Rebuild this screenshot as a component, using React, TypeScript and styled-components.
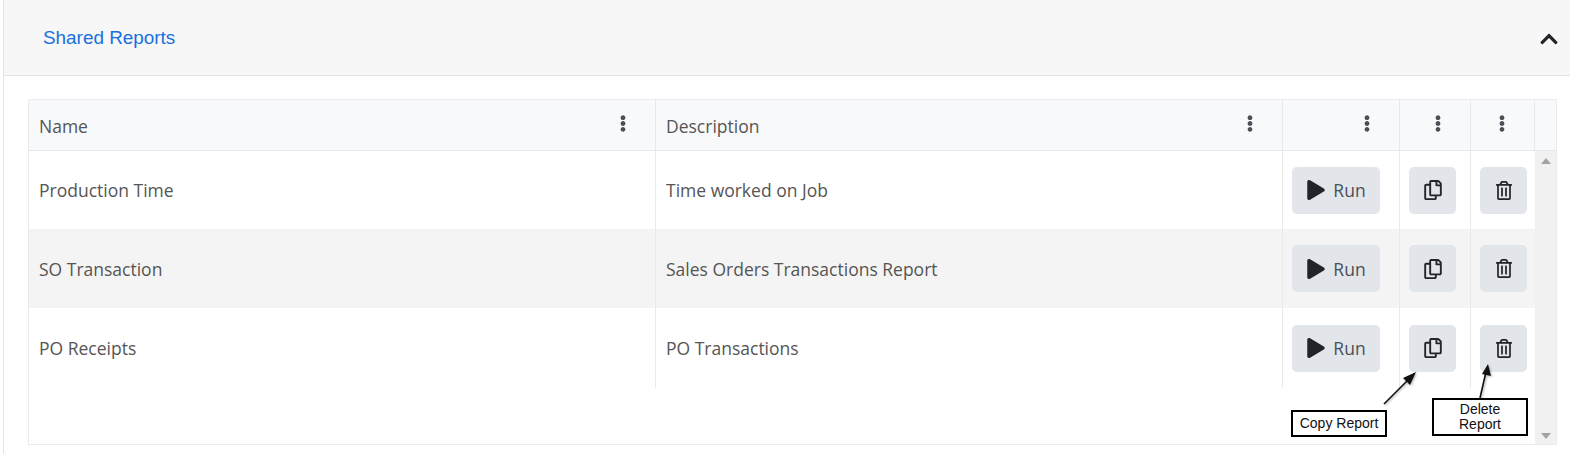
import React from 'react';
import styled, { createGlobalStyle } from 'styled-components';
import { FaChevronUp, FaEllipsisV, FaPlay, FaRegCopy, FaRegTrashAlt } from 'react-icons/fa';

const GlobalStyle = createGlobalStyle`
  html, body {
    margin: 0;
    padding: 0;
    background: #fff;
    overflow: hidden;
  }
  * {
    box-sizing: border-box;
  }
`;

const Page = styled.div`
  position: relative;
  width: 1570px;
  height: 454px;
  padding-left: 3px;
  font-family: 'Open Sans', sans-serif;
`;

const Panel = styled.div`
  height: 454px;
  border-left: 1px solid #e4e4e4;
`;

const PanelHeader = styled.div`
  display: flex;
  align-items: center;
  justify-content: space-between;
  height: 76px;
  padding: 0 11px 0 39px;
  background: #f7f7f7;
  border-bottom: 1px solid #e3e3e3;
`;

const PanelTitle = styled.span`
  font-family: 'Liberation Sans', sans-serif;
  font-size: 18.9px;
  color: #1a6fe0;
`;

const Chevron = styled(FaChevronUp)`
  width: 20px;
  height: 20px;
  color: #212529;
  margin-top: 2px;
`;

const PanelBody = styled.div`
  padding: 23px 0 0 24px;
`;

const Grid = styled.div`
  width: 1529px;
  height: 346px;
  border: 1px solid #ebebef;
  display: flex;
  flex-direction: column;
`;

const HeaderRow = styled.div`
  display: grid;
  grid-template-columns: 627px 627px 117px 71px 64px 21px;
  height: 51px;
  flex: none;
  background: #f8f9fa;
  border-bottom: 1px solid #e6e8eb;
`;

const HeaderCell = styled.div`
  display: flex;
  align-items: center;
  justify-content: space-between;
  padding: 2px 24px 0 10px;
  font-size: 17.5px;
  color: #555;
  border-right: 1px solid #e6e8eb;
  &:last-child {
    border-right: 0;
  }
`;

const MenuDots = styled(FaEllipsisV)`
  width: 16px;
  height: 17px;
  color: #495057;
  margin-left: auto;
  margin-top: -6px;
`;

const GridBody = styled.div`
  display: flex;
  flex: 1;
  min-height: 0;
`;

const Rows = styled.div`
  display: grid;
  grid-template-rows: 78px 79px 80px;
  align-content: start;
  width: 1506px;
`;

const Row = styled.div<{ $striped?: boolean }>`
  display: grid;
  grid-template-columns: 627px 627px 117px 71px 64px;
  background: ${({ $striped }) => ($striped ? '#f4f4f4' : '#fff')};
`;

const TextCell = styled.div`
  display: flex;
  align-items: center;
  padding-left: 10px;
  font-size: 17.5px;
  color: #555;
  border-right: 1px solid #e9e9e9;
`;

const ActionCell = styled.div`
  display: flex;
  align-items: center;
  padding-left: 9px;
  border-right: 1px solid #e9e9e9;
  &:last-child {
    border-right: 0;
  }
`;

const ActionButton = styled.button<{ $wide?: boolean }>`
  display: flex;
  align-items: center;
  justify-content: center;
  gap: 7px;
  width: ${({ $wide }) => ($wide ? '88px' : '47px')};
  height: 47px;
  padding: 0;
  border: 0;
  border-radius: 5px;
  background: #e2e6ea;
  color: #212529;
  font-family: 'Open Sans', sans-serif;
  font-size: 17.5px;
  svg {
    width: 20px;
    height: 20px;
  }
`;

const TrashIcon = styled(FaRegTrashAlt)`
  && {
    width: 16px;
    height: 19px;
  }
`;

const RunLabel = styled.span`
  color: #495057;
`;

const Scrollbar = styled.div`
  display: flex;
  flex-direction: column;
  align-items: center;
  justify-content: space-between;
  width: 21px;
  padding: 7px 0 5px;
  background: #f1f1f1;
`;

const ArrowUp = styled.div`
  border-left: 5px solid transparent;
  border-right: 5px solid transparent;
  border-bottom: 6px solid #a3a3a3;
`;

const ArrowDown = styled.div`
  border-left: 5px solid transparent;
  border-right: 5px solid transparent;
  border-top: 6px solid #a3a3a3;
`;

const Callout = styled.div<{ $left: number; $top: number; $height: number }>`
  position: absolute;
  left: ${({ $left }) => $left}px;
  top: ${({ $top }) => $top}px;
  width: 96px;
  height: ${({ $height }) => $height}px;
  padding: 0 12px;
  border: 2px solid #000;
  background: #fff;
  color: #111;
  font-family: 'Liberation Sans', sans-serif;
  font-size: 14px;
  line-height: 15.5px;
  text-align: center;
  display: flex;
  align-items: center;
  justify-content: center;
  white-space: pre-line;
`;

const CopyCallout = styled(Callout)`
  padding: 0;
  white-space: nowrap;
`;

const Arrows = styled.svg`
  position: absolute;
  left: 0;
  top: 0;
  pointer-events: none;
  filter: drop-shadow(1px 1px 1px rgba(0, 0, 0, 0.3));
`;

const reports = [
  { name: 'Production Time', description: 'Time worked on Job' },
  { name: 'SO Transaction', description: 'Sales Orders Transactions Report' },
  { name: 'PO Receipts', description: 'PO Transactions' },
];

const App = () => (
  <Page>
    <GlobalStyle />
    <Panel>
      <PanelHeader>
        <PanelTitle>Shared Reports</PanelTitle>
        <Chevron />
      </PanelHeader>
      <PanelBody>
        <Grid>
          <HeaderRow>
            <HeaderCell>
              Name
              <MenuDots />
            </HeaderCell>
            <HeaderCell>
              Description
              <MenuDots />
            </HeaderCell>
            <HeaderCell>
              <MenuDots />
            </HeaderCell>
            <HeaderCell>
              <MenuDots />
            </HeaderCell>
            <HeaderCell>
              <MenuDots />
            </HeaderCell>
            <HeaderCell />
          </HeaderRow>
          <GridBody>
            <Rows>
              {reports.map((report, i) => (
                <Row key={report.name} $striped={i === 1}>
                  <TextCell>{report.name}</TextCell>
                  <TextCell>{report.description}</TextCell>
                  <ActionCell>
                    <ActionButton $wide>
                      <FaPlay />
                      <RunLabel>Run</RunLabel>
                    </ActionButton>
                  </ActionCell>
                  <ActionCell>
                    <ActionButton>
                      <FaRegCopy />
                    </ActionButton>
                  </ActionCell>
                  <ActionCell>
                    <ActionButton>
                      <TrashIcon preserveAspectRatio="none" />
                    </ActionButton>
                  </ActionCell>
                </Row>
              ))}
            </Rows>
            <Scrollbar>
              <ArrowUp />
              <ArrowDown />
            </Scrollbar>
          </GridBody>
        </Grid>
      </PanelBody>
    </Panel>
    <Arrows width="1570" height="454" viewBox="0 0 1570 454">
      <path d="M1384 404 L1408 380" stroke="#111" strokeWidth="1.6" />
      <path d="M1416 372 L1403 378 L1410 385 Z" fill="#111" />
      <path d="M1480 398 L1486 372" stroke="#111" strokeWidth="1.6" />
      <path d="M1488 364 L1482 374 L1491 376 Z" fill="#111" />
    </Arrows>
    <CopyCallout $left={1291} $top={410} $height={27}>
      Copy Report
    </CopyCallout>
    <Callout $left={1432} $top={398} $height={38}>
      Delete Report
    </Callout>
  </Page>
);

export default App;
